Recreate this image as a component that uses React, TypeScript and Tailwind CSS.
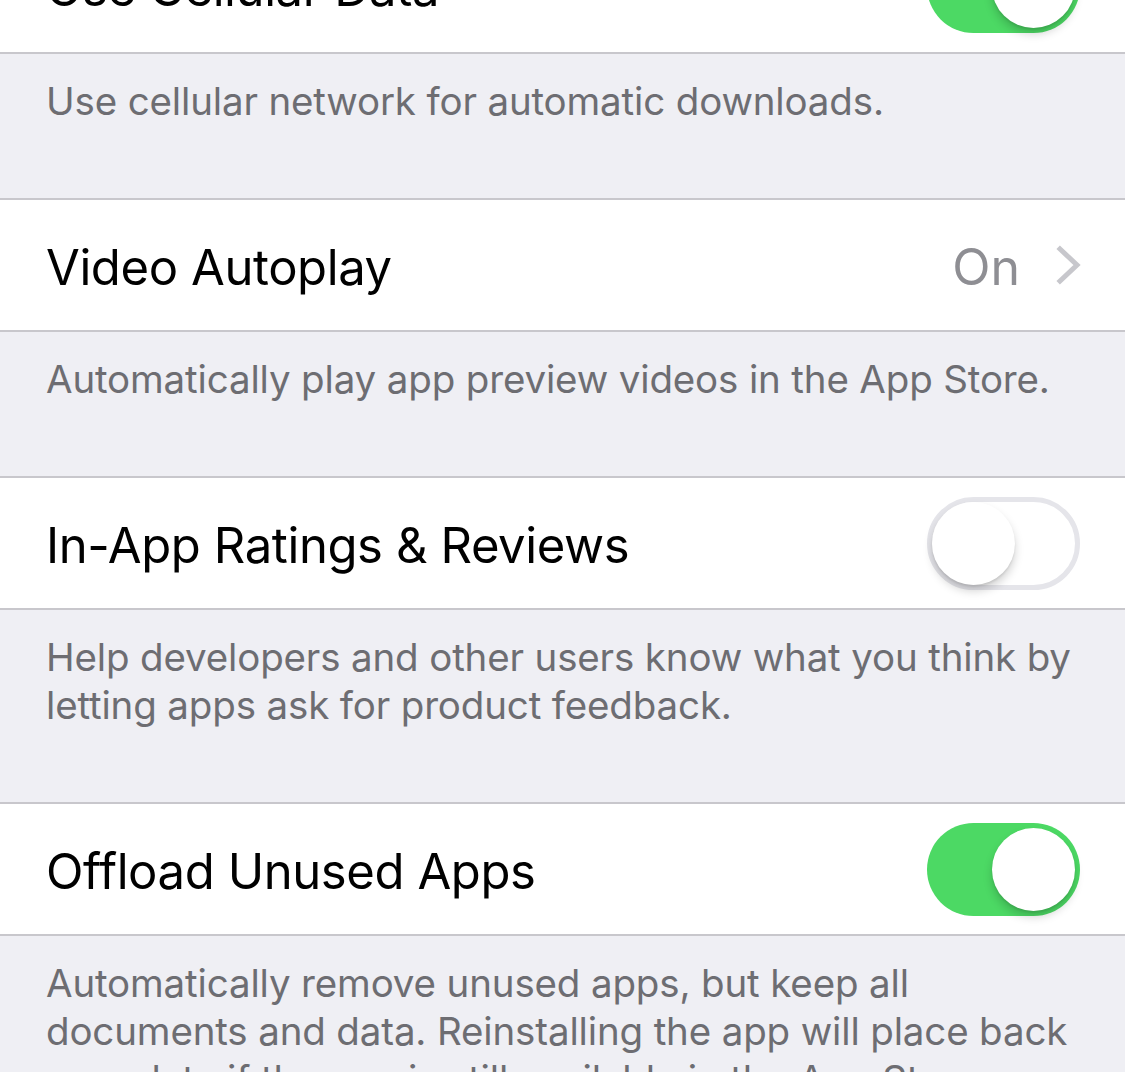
import React from "react";

const font = { fontFamily: "Inter, 'Noto Sans', sans-serif" };

const Toggle = ({ on }: { on: boolean }) => (
  <div
    className={
      on
        ? "relative w-[153px] h-[93px] rounded-full bg-[#4cd964] shrink-0"
        : "relative w-[153px] h-[93px] rounded-full bg-white border-[5px] border-[#e5e5ea] shrink-0"
    }
  >
    <div
      className={
        on
          ? "absolute top-[5px] right-[5px] w-[83px] h-[83px] rounded-full bg-white shadow-[0_6px_10px_rgba(0,0,0,0.18),0_2px_2px_rgba(0,0,0,0.08)]"
          : "absolute top-0 left-0 w-[83px] h-[83px] rounded-full bg-white shadow-[0_6px_10px_rgba(0,0,0,0.18),0_2px_2px_rgba(0,0,0,0.08)]"
      }
    />
  </div>
);

const Chevron = () => (
  <svg width="26" height="40" viewBox="0 0 26 40" fill="none" className="shrink-0">
    <path d="M4 4 L21 20 L4 36" stroke="#c7c7cc" strokeWidth="5" strokeLinecap="square" strokeLinejoin="miter" />
  </svg>
);

interface RowProps {
  label: string;
  right: React.ReactNode;
  className?: string;
}

const Row = ({ label, right, className = "" }: RowProps) => (
  <div className={`h-[134px] bg-white border-y-2 border-[#c8c7cc] flex items-center justify-between pl-[46px] pr-[45px] ${className}`}>
    <span className="pt-[5px] text-[49px] text-black tracking-[-0.4px]">{label}</span>
    {right}
  </div>
);

const Footer = ({ children, h }: { children: React.ReactNode; h: string }) => (
  <div className={`${h} pl-[46px] pr-[40px] pt-[23px]`}>
    <p className="text-[38.5px] leading-[48px] text-[#6d6d72] tracking-[-0.15px]">{children}</p>
  </div>
);

export default function App() {
  return (
    <div className="w-[1125px] h-[1072px] overflow-hidden bg-[#efeff4]" style={font}>
      <Row className="-mt-[80px] border-t-0" label="Use Cellular Data" right={<Toggle on />} />
      <Footer h="h-[144px]">Use cellular network for automatic downloads.</Footer>
      <Row
        label="Video Autoplay"
        right={
          <div className="flex items-center gap-[36px] -mr-[2px]">
            <span className="pt-[5px] text-[50px] text-[#8e8e93]">On</span>
            <Chevron />
          </div>
        }
      />
      <Footer h="h-[144px]">Automatically play app preview videos in the App Store.</Footer>
      <Row label="In-App Ratings & Reviews" right={<Toggle on={false} />} />
      <Footer h="h-[192px]">
        Help developers and other users know what you think by letting apps ask for product feedback.
      </Footer>
      <Row label="Offload Unused Apps" right={<Toggle on />} />
      <Footer h="h-[200px]">
        Automatically remove unused apps, but keep all documents and data. Reinstalling the app will place back your data if the app is still available in the App Store.
      </Footer>
    </div>
  );
}
